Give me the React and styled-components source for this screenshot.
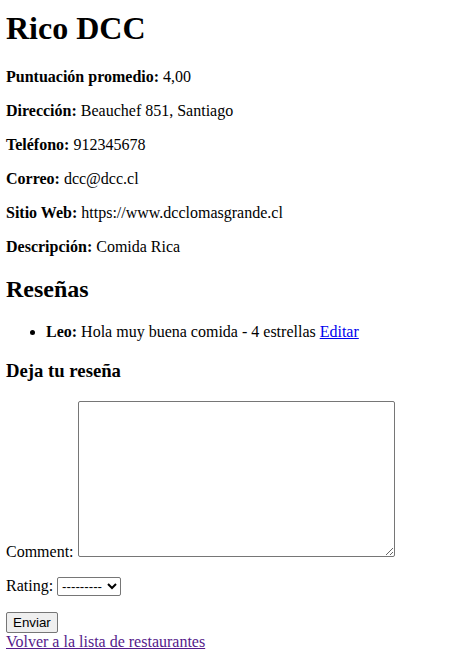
import React from 'react';
import styled, { createGlobalStyle } from 'styled-components';

const GlobalStyle = createGlobalStyle`
  body {
    margin: 0;
    font-family: "Liberation Serif", "Times New Roman", serif;
    font-size: 16px;
    color: #000;
    background: #fff;
  }
`;

const Page = styled.div`
  padding: 0 6px;
`;

const Title = styled.h1`
  font-size: 32px;
  font-weight: bold;
  margin: 10px 0 21.44px;
`;

const SectionTitle = styled.h2`
  font-size: 24px;
  font-weight: bold;
  margin: 19.92px 0;
`;

const SubTitle = styled.h3`
  font-size: 18.72px;
  font-weight: bold;
  margin: 18.72px 0;
`;

const Info = styled.p`
  margin: 16px 0;
`;

const Reviews = styled.ul`
  margin: 16px 0;
  padding-left: 40px;
`;

const Link = styled.a`
  color: ${(p) => (p.$visited ? '#551a8b' : '#0000ee')};
  text-decoration: underline;
  cursor: pointer;
`;

const Field = styled.p`
  margin: 16px 0;
`;

const CommentBox = styled.textarea`
  width: 317px;
  height: 156px;
  box-sizing: border-box;
  margin: 0;
  padding: 2px;
  border: 1px solid #767676;
  border-radius: 2px;
  font-family: "Liberation Mono", monospace;
  font-size: 13.33px;
  vertical-align: baseline;
`;

const RatingSelect = styled.select`
  font-family: "Liberation Sans", Arial, sans-serif;
  font-size: 13.33px;
  height: 19px;
  width: 64px;
  border: 1px solid #767676;
  border-radius: 2px;
  background: #fff;
  color: #000;
  padding: 0;
`;

const SubmitButton = styled.button`
  font-family: "Liberation Sans", Arial, sans-serif;
  font-size: 13.33px;
  padding: 1px 6px;
  border: 1px solid #767676;
  border-radius: 2px;
  background: #efefef;
  color: #000;
  height: 21px;
`;

const info = [
  ['Puntuación promedio:', '4,00'],
  ['Dirección:', 'Beauchef 851, Santiago'],
  ['Teléfono:', '912345678'],
  ['Correo:', 'dcc@dcc.cl'],
  ['Sitio Web:', 'https://www.dcclomasgrande.cl'],
  ['Descripción:', 'Comida Rica'],
];

export default function App() {
  return (
    <Page>
      <GlobalStyle />
      <Title>Rico DCC</Title>
      {info.map(([label, value]) => (
        <Info key={label}>
          <strong>{label}</strong> {value}
        </Info>
      ))}
      <SectionTitle>Reseñas</SectionTitle>
      <Reviews>
        <li>
          <strong>Leo:</strong> Hola muy buena comida - 4 estrellas <Link>Editar</Link>
        </li>
      </Reviews>
      <SubTitle>Deja tu reseña</SubTitle>
      <form onSubmit={(e) => e.preventDefault()}>
        <Field>
          <label htmlFor="comment">Comment:</label> <CommentBox id="comment" />
        </Field>
        <Field>
          <label htmlFor="rating">Rating:</label>{' '}
          <RatingSelect id="rating" defaultValue="">
            <option value="">---------</option>
            <option value="1">1</option>
            <option value="2">2</option>
            <option value="3">3</option>
            <option value="4">4</option>
            <option value="5">5</option>
          </RatingSelect>
        </Field>
        <SubmitButton type="submit">Enviar</SubmitButton>
      </form>
      <Link $visited>Volver a la lista de restaurantes</Link>
    </Page>
  );
}
